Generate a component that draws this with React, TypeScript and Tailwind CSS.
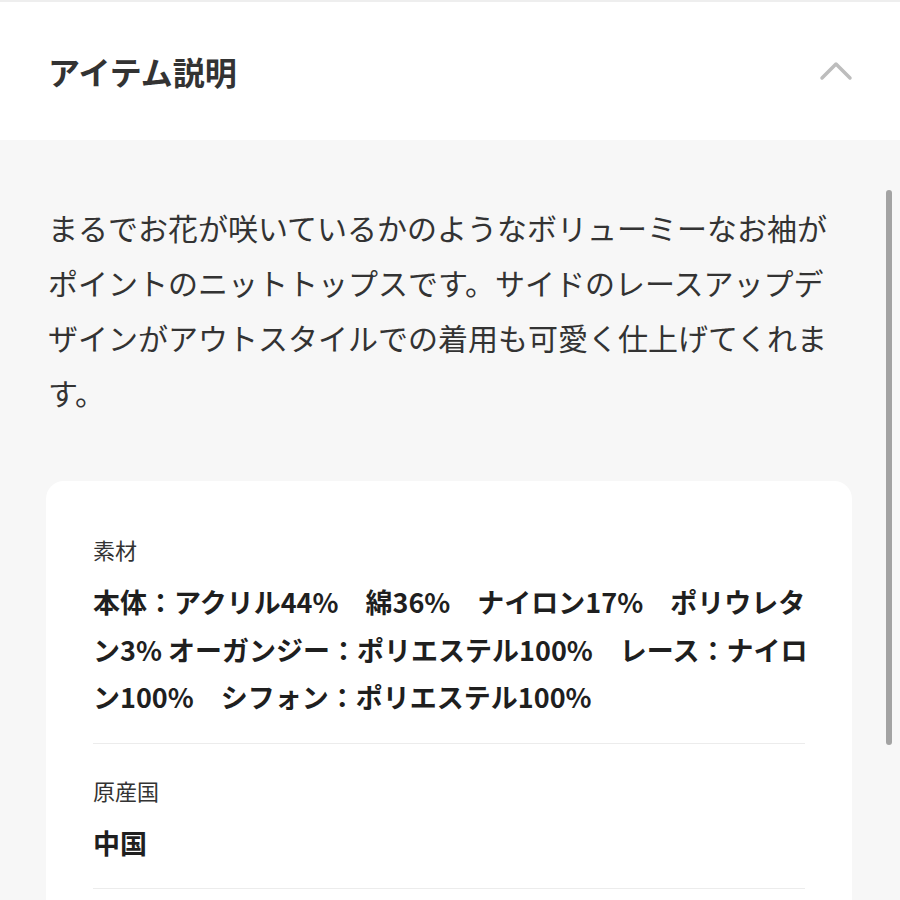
import React from "react";

const font = { fontFamily: '"Noto Sans CJK JP", "Noto Sans", sans-serif' };

const descLines = [
  "まるでお花が咲いているかのようなボリューミーなお袖が",
  "ポイントのニットトップスです。サイドのレースアップデ",
  "ザインがアウトスタイルでの着用も可愛く仕上げてくれま",
  "す。",
];

const specs = [
  {
    label: "素材",
    lines: [
      "本体：アクリル44%　綿36%　ナイロン17%　ポリウレタ",
      "ン3% オーガンジー：ポリエステル100%　レース：ナイロ",
      "ン100%　シフォン：ポリエステル100%",
    ],
  },
  { label: "原産国", lines: ["中国"] },
];

const ChevronUp = () => (
  <svg width="34" height="22" viewBox="0 0 34 22" fill="none">
    <path
      d="M3 18 L17 4 L31 18"
      stroke="#bdbdbd"
      strokeWidth="3.5"
      strokeLinecap="round"
      strokeLinejoin="round"
    />
  </svg>
);

export default function App() {
  return (
    <div className="w-[900px] h-[900px] overflow-hidden bg-[#f7f7f7] flex flex-col" style={font}>
      {/* Header */}
      <div className="h-[2px] bg-[#eeeeee] shrink-0" />
      <div className="bg-white h-[138px] flex items-center justify-between pl-[48px] pr-[47px] shrink-0">
        <h2 className="text-[32px] font-bold text-[#333333] leading-none">
          アイテム説明
        </h2>
        <ChevronUp />
      </div>

      {/* Body */}
      <div className="relative flex-1 pl-[48px] pr-[48px] pt-[60px]">
        <p className="text-[30px] leading-[55px] text-[#333333]">
          {descLines.map((l) => (
            <span key={l} className="block whitespace-nowrap">
              {l}
            </span>
          ))}
        </p>

        <div className="mt-[61px] w-[806px] -ml-[2px] bg-white rounded-[18px] px-[47px] pt-[53px] pb-[60px]">
          {specs.map((s) => (
            <div key={s.label} className="border-b border-[#ececec] pb-[22px] mb-[31px] last:mb-0">
              <div className="text-[22px] leading-[30px] text-[#333333]">{s.label}</div>
              <div className="mt-[14px] text-[27px] leading-[47.5px] font-bold text-[#1f1f1f]">
                {s.lines.map((l) => (
                  <span key={l} className="block whitespace-nowrap">
                    {l}
                  </span>
                ))}
              </div>
            </div>
          ))}
        </div>

        {/* scrollbar */}
        <div className="absolute left-[886px] top-[50px] w-[6px] h-[555px] rounded-full bg-[#a3a3a3]" />
      </div>
    </div>
  );
}
